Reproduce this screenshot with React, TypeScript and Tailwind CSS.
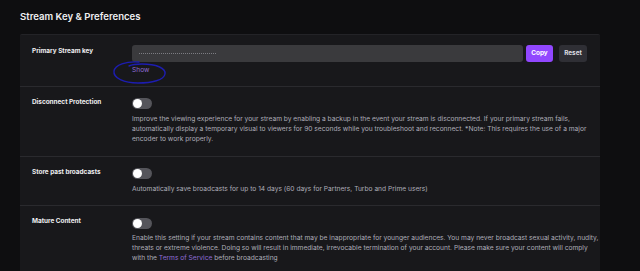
import React from "react";

function Toggle() {
    return (
        <div className="w-[20px] h-[11px] rounded-full bg-[#55555b] flex items-center px-[1px]">
            <div className="w-[9px] h-[9px] rounded-full bg-white" />
        </div>
    );
}

function Row({ label, children, last, labelTop }: { label: string; children: React.ReactNode; last?: boolean; labelTop: string }) {
    return (
        <div className={"flex px-3 " + (last ? "" : "border-b border-[#2a2a2e]")}>
            <div className={"w-[100px] shrink-0 text-[6.4px] leading-[10px] font-bold text-[#efeff1] " + labelTop}>{label}</div>
            <div className="flex-1 min-w-0">{children}</div>
        </div>
    );
}

export default function App() {
    return (
        <div
            className="w-[640px] h-[271px] overflow-hidden bg-[#0e0e10] flex"
            style={{ fontFamily: "Inter, 'Noto Sans', sans-serif" }}
        >
            <div className="w-[620px] pl-[20px] pt-[10px]">
                {/* heading */}
                <h1 className="text-[9.6px] font-semibold text-[#efeff1] leading-[14px] mb-[10px]">
                    Stream Key &amp; Preferences
                </h1>

                {/* card */}
                <div className="w-[580px] bg-[#18181b] rounded-t-[2px] border-t border-[#232327]">
                    <Row label="Primary Stream key" labelTop="pt-[11px]">
                        <div className="pt-[10px] pb-[11px] relative">
                            <div className="flex items-center">
                                <div className="flex-1 h-[17px] rounded-[3px] bg-[#3a3a3d] flex items-center px-[7px]">
                                    <div className="w-[77px] border-t border-dotted border-[#7c7c82]" />
                                </div>
                                <button className="w-[27px] h-[17px] ml-[3px] rounded-[3px] bg-[#9147ff] text-white text-[6.4px] font-bold">Copy</button>
                                <button className="w-[28px] h-[17px] ml-[6px] mr-[1px] rounded-[3px] bg-[#2f2f35] text-[#dedee3] text-[6.4px] font-bold">Reset</button>
                            </div>
                            <div className="text-[6.6px] text-[#8e6cd6] mt-[4px] leading-[9px]">Show</div>
                            <svg className="absolute left-[-20px] top-[25px]" width="56" height="26" viewBox="0 0 56 26" fill="none">
                                <path
                                    d="M27 2 C14 1 3 5 2 11 C1 18 12 23 26 23 C40 23 52 20 53 14 C54 8 44 4 30 4 C24 4 19 5 17 6"
                                    stroke="#1d1db0"
                                    strokeWidth="1.4"
                                    strokeLinecap="round"
                                />
                            </svg>
                        </div>
                    </Row>

                    <Row label="Disconnect Protection" labelTop="pt-[10px]">
                        <div className="pt-[11px] pb-[12px]">
                            <Toggle />
                            <p className="text-[6.65px] leading-[10px] text-[#adadb8] mt-[5px] whitespace-nowrap">
                                Improve the viewing experience for your stream by enabling a backup in the event your stream is disconnected. If your primary stream fails,<br />
                                automatically display a temporary visual to viewers for 90 seconds while you troubleshoot and reconnect. *Note: This requires the use of a major<br />
                                encoder to work properly.
                            </p>
                        </div>
                    </Row>

                    <Row label="Store past broadcasts" labelTop="pt-[10px]">
                        <div className="pt-[11px] pb-[11px]">
                            <Toggle />
                            <p className="text-[6.65px] leading-[10px] text-[#adadb8] mt-[5px] whitespace-nowrap">
                                Automatically save broadcasts for up to 14 days (60 days for Partners, Turbo and Prime users)
                            </p>
                        </div>
                    </Row>

                    <Row label="Mature Content" last labelTop="pt-[10px]">
                        <div className="pt-[12px] pb-[12px]">
                            <Toggle />
                            <p className="text-[6.65px] leading-[10px] text-[#adadb8] mt-[4px] whitespace-nowrap">
                                Enable this setting if your stream contains content that may be inappropriate for younger audiences. You may never broadcast sexual activity, nudity,<br />
                                threats or extreme violence. Doing so will result in immediate, irrevocable termination of your account. Please make sure your content will comply<br />
                                with the <span className="text-[#8e6cd6]">Terms of Service</span> before broadcasting
                            </p>
                        </div>
                    </Row>
                </div>
            </div>
            <div className="flex-1 bg-[#0e0e10]" />
        </div>
    );
}
